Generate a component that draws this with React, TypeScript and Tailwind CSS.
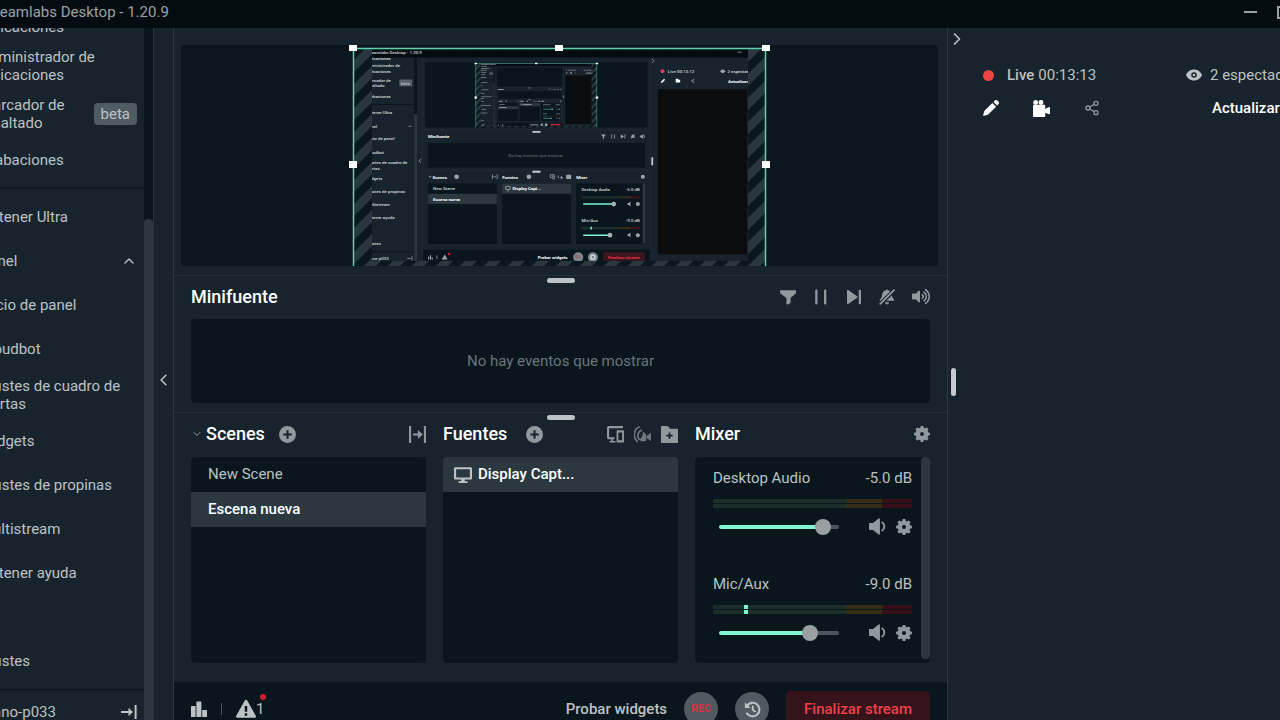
import { useState, type ReactNode } from "react";
import { ChevronDown, ChevronLeft, ChevronRight, ChevronUp, Share2 } from "lucide-react";
import { FaVolumeUp } from "react-icons/fa";

type IconProps = { className?: string };

function Icon({ className = "h-4 w-4", children }: { className?: string; children: ReactNode }) {
  return (
    <svg className={`shrink-0 ${className}`} viewBox="0 0 16 16" fill="currentColor" aria-hidden="true">
      {children}
    </svg>
  );
}

function GearIcon({ className }: IconProps) {
  return (
    <Icon className={className}>
      <circle cx="8" cy="8" r="4.2" fill="none" stroke="currentColor" strokeWidth="4.4" />
      {[0, 45, 90, 135].map((deg) => (
        <g key={deg} transform={`rotate(${deg} 8 8)`}>
          <rect x="6.4" y="0" width="3.2" height="3.6" rx="0.8" />
          <rect x="6.4" y="12.4" width="3.2" height="3.6" rx="0.8" />
        </g>
      ))}
    </Icon>
  );
}

function PlusCircleIcon({ className }: IconProps) {
  return (
    <Icon className={className}>
      <path fillRule="evenodd" d="M8 0a8 8 0 1 0 0 16A8 8 0 0 0 8 0ZM7 4h2v3h3v2H9v3H7V9H4V7h3V4Z" />
    </Icon>
  );
}

function FilterIcon({ className }: IconProps) {
  return (
    <Icon className={className}>
      <path d="M.8 1.2h14.4c.5 0 .8.4.8.8v1.4c0 .4-.1.7-.4 1L10.6 9v4.3c0 .4-.2.7-.5.9l-2.4 1.3c-.6.3-1.300 0-1.300-.7V9L.4 4.4C.1 4.100 0 3.800 0 3.400V2c0-.4.300-.8.8-.8Z" />
    </Icon>
  );
}

function PauseIcon({ className }: IconProps) {
  return (
    <Icon className={className}>
      <rect x="2.2" y="0.5" width="2.3" height="15" rx="1" />
      <rect x="11" y="0.5" width="2.3" height="15" rx="1" />
    </Icon>
  );
}

function SkipIcon({ className }: IconProps) {
  return (
    <Icon className={className}>
      <path d="M1 1.700c0-.7.8-1.100 1.300-.7l8.800 6.300c.5.4.5 1 0 1.400L2.300 15c-.5.4-1.300 0-1.300-.7V1.700Z" />
      <rect x="12.700" y="0.800" width="2.300" height="14.400" rx="0.800" />
    </Icon>
  );
}

function BellSlashIcon({ className }: IconProps) {
  return (
    <Icon className={className}>
      <path d="M8 .4c.6 0 1 .4 1 .9 1.100.2 2 .7 2.600 1.400L2.600 11.800H1.500c-.8 0-1-.8-.5-1.300C2.600 9 3.100 7.600 3.100 5.800 3.100 3.500 4.700 1.700 7 1.300c0-.5.4-.9 1-.9Z" />
      <path d="M13 6.300c.1 1.700.6 3 2 4.200.5.5.3 1.300-.5 1.300H7.300L13 6.300ZM6 13.200h4c0 1.200-.9 2.100-2 2.100s-2-.9-2-2.100Z" />
      <path d="M15 1.200 1.300 14.800" stroke="#17242d" strokeWidth="3.600" />
      <path d="M15 1.200 1.300 14.800" stroke="currentColor" strokeWidth="1.900" strokeLinecap="round" />
    </Icon>
  );
}

function SpeakerIcon({ className }: IconProps) {
  return (
    <Icon className={className}>
      <path d="M0 5.600C0 5 .4 4.600 1 4.600h2.800L9 .5c.6-.5 1.300-.1 1.300.6v13.800c0 .7-.7 1.100-1.300.6l-5.200-4.100H1c-.6 0-1-.4-1-1V5.600Z" />
      <path d="M12.500 4.200c2.600 1.600 2.600 6 0 7.600" fill="none" stroke="currentColor" strokeWidth="1.800" strokeLinecap="round" />
    </Icon>
  );
}

function TransitionIcon({ className }: IconProps) {
  return (
    <Icon className={className}>
      <path d="M0 0h2v16H0zM14 0h2v16h-2zM3.800 7h4.600V3.800L13 8l-4.600 4.200V9H3.800z" />
    </Icon>
  );
}

function DevicesIcon({ className }: IconProps) {
  return (
    <Icon className={className}>
      <path d="M1.500 0H15v2H2v8.500h5v2H5.500V14H8v1.500H2.500V14h1.500v-1.500H1.500C.7 12.500 0 11.800 0 11V1.500C0 .7.7 0 1.500 0Z" />
      <path fillRule="evenodd" d="M10 4h5c.6 0 1 .4 1 1v9.500c0 .6-.4 1-1 1h-5c-.6 0-1-.4-1-1V5c0-.6.4-1 1-1Zm.7 2v7.500h3.600V6h-3.600Z" />
    </Icon>
  );
}

function StudioIcon({ className }: IconProps) {
  return (
    <Icon className={className}>
      <path d="M5 1C-.9 3-.9 11 3 14.500M7 4C3 5.500 3 10.500 5 12.500" fill="none" stroke="currentColor" strokeWidth="1.600" strokeLinecap="round" />
      <path d="M8.500 5.500 11.500 8v5.500c0 .5-.4.900-.9.900H6.500L5.500 13l2.200-3.500.8-4ZM12 9.500 16 6v8l-4-2.500z" />
    </Icon>
  );
}

function FolderPlusIcon({ className }: IconProps) {
  return (
    <Icon className={className}>
      <path fillRule="evenodd" d="M1 0h5.500l2 2.500H15c.6 0 1 .4 1 1V15c0 .6-.4 1-1 1H1c-.6 0-1-.4-1-1V1c0-.6.4-1 1-1ZM7.200 6v2.200H5v1.600h2.200V12h1.600V9.800H11V8.200H8.800V6H7.200Z" />
    </Icon>
  );
}

function MonitorIcon({ className }: IconProps) {
  return (
    <Icon className={className}>
      <path fillRule="evenodd" d="M1.200 1h13.600C15.500 1 16 1.500 16 2.200v8.600c0 .7-.5 1.200-1.200 1.200H9.500v1.500H12V15H4v-1.500h2.500V12H1.200C.5 12 0 11.500 0 10.800V2.200C0 1.500.5 1 1.200 1Zm.7 1.800v7.400h12.200V2.800H1.900Z" />
    </Icon>
  );
}

function StatsIcon({ className }: IconProps) {
  return (
    <Icon className={className}>
      <rect x="0" y="5" width="4.6" height="11" rx="0.6" />
      <rect x="5.4" y="0.5" width="5" height="15.5" rx="0.6" />
      <rect x="11.2" y="9" width="4.8" height="7" rx="0.6" />
    </Icon>
  );
}

function WarningIcon({ className }: IconProps) {
  return (
    <Icon className={className}>
      <path fillRule="evenodd" d="M7 1.200c.4-.8 1.600-.8 2 0l6.800 12.200c.4.800-.1 1.600-1 1.600H1.200c-.9 0-1.400-.8-1-1.600L7 1.200Zm0 4.300v4.700h2V5.500H7Zm1 5.700a1.200 1.200 0 1 0 0 2.400 1.200 1.200 0 0 0 0-2.400Z" />
    </Icon>
  );
}

function ReplayIcon({ className }: IconProps) {
  return (
    <Icon className={className}>
      <path d="M2.600 4.800A6.400 6.400 0 1 1 2.800 11.600" fill="none" stroke="currentColor" strokeWidth="2" strokeLinecap="round" />
      <path d="M.8 1.200v5.300h5.300L.8 1.200Z" />
      <path d="M8.200 5v3.400l2.400 1.400" fill="none" stroke="currentColor" strokeWidth="1.700" strokeLinecap="round" />
    </Icon>
  );
}

function EyeIcon({ className }: IconProps) {
  return (
    <Icon className={className}>
      <path fillRule="evenodd" d="M8 2.500c3.600 0 6.600 2.200 8 5.500-1.400 3.300-4.400 5.500-8 5.500S1.400 11.300 0 8c1.400-3.300 4.400-5.500 8-5.500Zm0 2.700a2.800 2.800 0 1 0 0 5.600 2.800 2.800 0 0 0 0-5.600Z" />
      <circle cx="8" cy="8" r="1.300" />
    </Icon>
  );
}

function CollapseRightIcon({ className }: IconProps) {
  return (
    <Icon className={className}>
      <path d="M13.600 1h2v14h-2zM0 7.100h7.500V3.800L12 8l-4.500 4.200V8.900H0z" />
    </Icon>
  );
}

function PencilIcon({ className }: IconProps) {
  return (
    <Icon className={className}>
      <path d="M9.300 2.900 13.100 6.700 4.900 14.700 1 15.800c-.6.2-1-.2-.8-.8L1.300 11.100 9.300 2.900ZM10.500 1.900 11.900.5c.7-.7 1.700-.7 2.400 0l1.200 1.200c.7.7.7 1.700 0 2.400l-1.400 1.400-3.600-3.600Z" />
    </Icon>
  );
}

function CameraIcon({ className }: IconProps) {
  return (
    <Icon className={className}>
      <circle cx="2.500" cy="2.300" r="2.300" />
      <circle cx="7.500" cy="2.300" r="2.300" />
      <path d="M1 4.500h9.500c.6 0 1 .4 1 1v3l3.500-1.800c.5-.3 1 0 1 .6v5.400c0 .6-.5.900-1 .6L11.500 12v3c0 .6-.4 1-1 1H1c-.6 0-1-.4-1-1V5.500c0-.6.4-1 1-1Z" />
    </Icon>
  );
}

const capturedLabels: [number, number, string, boolean?][] = [
  [-20, 16, "Streamlabs Desktop - 1.20.9"],
  [-20, 35, "aplicaciones"],
  [-20, 62, "Administrador de"],
  [-20, 81, "aplicaciones"],
  [-20, 110, "Marcador de"],
  [-20, 129, "resaltado"],
  [-20, 165, "Grabaciones"],
  [-20, 222, "Obtener Ultra"],
  [-20, 267, "Panel"],
  [-20, 310, "Inicio de panel"],
  [-20, 355, "Cloudbot"],
  [-20, 391, "Ajustes de cuadro de"],
  [-20, 410, "alertas"],
  [-20, 446, "Widgets"],
  [-20, 490, "Ajustes de propinas"],
  [-20, 534, "Multistream"],
  [-20, 578, "Obtener ayuda"],
  [-20, 667, "Ajustes"],
  [-20, 717, "Mano-p033"],
  [191, 303, "Minifuente", true],
  [206, 440, "Scenes", true],
  [443, 440, "Fuentes", true],
  [695, 440, "Mixer", true],
  [208, 480, "New Scene"],
  [208, 515, "Escena nueva", true],
  [478, 480, "Display Capt...", true],
  [713, 484, "Desktop Audio"],
  [864, 484, "-5.0 dB"],
  [713, 589, "Mic/Aux"],
  [864, 589, "-9.0 dB"],
  [564, 714, "Probar widgets", true],
  [1007, 81, "Live 00:13:12"],
  [1210, 81, "2 espectadores"],
  [1212, 114, "Actualizar", true],
];

// the captured desktop, which shows the preview inside itself
function CapturedDesktop({ depth }: { depth: number }) {
  return (
    <svg x="372" y="49" width="376" height="212" viewBox="0 0 1280 720">
      <rect width="1280" height="720" fill="#17242d" />
      <rect width="1280" height="28" fill="#030c11" />
      <rect x="144" y="28" width="9" height="192" fill="#09161d" />
      <rect x="144" y="220" width="9" height="500" fill="#2b383f" />
      <path d="M0 188h144M0 689h144" stroke="#09161d" strokeWidth="3" />
      <path d="M173 28v692M173 275h774M173 412h774M947 28v692" stroke="#22313a" strokeWidth="2" />
      <rect x="93" y="103" width="44" height="23" rx="3" fill="#56636a" />
      <rect x="181" y="45" width="757" height="221" fill="#09161d" />
      {depth > 0 && (
        <svg x="181" y="45" width="757" height="221" viewBox="181 45 757 221">
          <CaptureScene depth={depth - 1} />
        </svg>
      )}
      <rect x="191" y="319" width="738" height="84" fill="#09161d" />
      <rect x="191" y="457" width="234" height="206" fill="#09161d" />
      <rect x="191" y="492" width="234" height="35" fill="#2b383f" />
      <rect x="443" y="457" width="235" height="206" fill="#09161d" />
      <rect x="443" y="457" width="235" height="35" fill="#2b383f" />
      <rect x="695" y="457" width="235" height="206" fill="#09161d" />
      <rect x="921" y="457" width="9" height="204" fill="#2b383f" />
      <rect x="174" y="682" width="773" height="38" fill="#09161d" />
      <rect x="973" y="136" width="304" height="562" fill="#0b0c0d" />
      <rect x="787" y="691" width="143" height="29" fill="#3a161e" />
      <path d="M546 281h28M546 417h28M954 368v27" stroke="#c4cace" strokeWidth="6" />
      <g fill="none" stroke="#8f999e" strokeWidth="3">
        <path d="m124 265 5-5 5 5M167 373l-7 7 7 7M953 32l7 7-7 7M1244 10h14M194 431l4 5 4-5" />
        <path d="M410 426v16M426 426v16M413 434h9M816 290v14M826 290v14M861 290v14M607 427h14M607 427v10h7M615 431h7v10h-7z" />
        <path d="M634 430q-3 5 3 9M925 291q6 6 0 12M895 290l-14 14M221 702v12M1087 108l11-6M1087 108l11 6" />
        <path d="M455 467h15v10h-15zM459 482h7M120 712h11M136 705v14" />
      </g>
      <g fill="#9ba4a9">
        <circle cx="288" cy="434" r="8" />
        <circle cx="534" cy="434" r="8" />
        <circle cx="922" cy="434" r="7" />
        <path d="M780 290h16l-6 8v7h-4v-7zM847 290l11 7-11 7zM913 294h4l6-5v16l-6-5h-4zM640 440l5-9 6 9zM661 427h17v15h-17z" />
        <path d="M880 301q4-3 4-8 4-5 8 0 0 5 4 8z" />
        <path d="M191 706h4v10h-4zM197 701h4v15h-4zM203 709h4v7h-4zM237 716l11-17 9 17z" />
        <path d="M870 523h4l6-5v17l-6-5h-4zM870 629h4l6-5v17l-6-5h-4z" />
        <circle cx="905" cy="527" r="7" />
        <circle cx="905" cy="633" r="7" />
        <circle cx="702" cy="708" r="17" fill="#7b878d" />
        <circle cx="752" cy="708" r="17" fill="#7b878d" />
        <circle cx="752" cy="708" r="7" fill="none" stroke="#e2e5e7" strokeWidth="4" />
        <ellipse cx="1194" cy="75" rx="8" ry="6" />
      </g>
      <g fill="#ffffff">
        <path d="M983 115l2-6 9-9 4 4-9 9zM1034 100h9v5l6-2v10h-15z" />
      </g>
      <path d="M713 504h134M713 609h134" stroke="#1d3029" strokeWidth="8" />
      <path d="M847 504h35M847 609h35" stroke="#352e16" strokeWidth="8" />
      <path d="M882 504h30M882 609h30" stroke="#3a1219" strokeWidth="8" />
      <path d="M719 527h104M719 633h91M746 604v10" stroke="#80f5d2" strokeWidth="5" />
      <circle cx="823" cy="527" r="8" fill="#aab1b4" />
      <circle cx="810" cy="633" r="8" fill="#aab1b4" />
      <circle cx="989" cy="75" r="7" fill="#e63a58" />
      <circle cx="262" cy="697" r="4" fill="#d01c34" />
      {depth > 0 ? (
        <g fontSize="15" fill="#d3d8da">
          {capturedLabels.map(([x, y, label, strong]) => (
            <text key={`${x}-${y}`} x={x} y={y} fill={strong ? "#ffffff" : undefined} fontWeight={strong ? 700 : 500}>
              {label}
            </text>
          ))}
          <text x="99" y="120">beta</text>
          <text x="464" y="367" fill="#6b757a">No hay eventos que mostrar</text>
          <text x="691" y="712" fontSize="11" fill="#c1343f">REC</text>
          <text x="803" y="714" fill="#ee3340" fontWeight="700">Finalizar stream</text>
        </g>
      ) : (
        <g fill="#aab3b7">
          {capturedLabels.map(([x, y, label, strong]) => (
            <rect key={`${x}-${y}`} x={x} y={y - 10} width={label.length * 7} height={strong ? 9 : 6} />
          ))}
          <rect x="803" y="702" width="111" height="10" fill="#e02f45" />
        </g>
      )}
    </svg>
  );
}

function CaptureScene({ depth }: { depth: number }) {
  return (
    <>
      <rect x="353" y="48" width="413" height="232" fill="#0a171f" />
      <rect x="353" y="48" width="413" height="232" fill="url(#stripes)" />
      <CapturedDesktop depth={depth} />
      <rect x="353.5" y="48.5" width="412" height="232" fill="none" stroke="#5fd3ab" strokeWidth="1.5" />
      <g fill="#ffffff">
        {[353, 559, 766].map((x) => (
          <rect key={x} x={x - 4} y="45" width="8" height="6" />
        ))}
        <rect x="349" y="161" width="8" height="7" />
        <rect x="762" y="161" width="8" height="7" />
      </g>
    </>
  );
}

function Preview() {
  return (
    <section aria-label="Vista previa" className="pt-[17px] pr-[9px] pb-[9px] pl-[7px]">
      <div className="flex justify-center rounded-xs bg-[#0a171e]">
        <svg className="h-[221px] w-[422px]" viewBox="349 45 422 221" fontFamily="Roboto, sans-serif" role="img" aria-label="Captura de pantalla">
          <defs>
            <pattern id="stripes" width="24" height="24" patternUnits="userSpaceOnUse">
              <path d="M-6 18 18 -6M6 30 30 6" stroke="#2a373f" strokeWidth="8.5" />
            </pattern>
          </defs>
          <CaptureScene depth={1} />
        </svg>
      </div>
    </section>
  );
}

type NavItem = { label: string; lines?: [string, string]; badge?: string; open?: boolean };

const appItems: NavItem[] = [
  { label: "tienda", lines: ["Tienda de", "aplicaciones"] },
  { label: "admin", lines: ["Administrador de", "aplicaciones"] },
  { label: "marcador", lines: ["Marcador de", "resaltado"], badge: "beta" },
  { label: "Grabaciones" },
];

const panelItems: NavItem[] = [
  { label: "Obtener Ultra" },
  { label: "Panel", open: true },
  { label: "Inicio de panel" },
  { label: "Cloudbot" },
  { label: "alertas", lines: ["Ajustes de cuadro de", "alertas"] },
  { label: "Widgets" },
  { label: "Ajustes de propinas" },
  { label: "Multistream" },
  { label: "Obtener ayuda" },
];

function NavRow({ item }: { item: NavItem }) {
  return (
    <li>
      <a href="#" className="flex min-h-11 items-center justify-between py-[6px] pr-[7px] leading-[18px] whitespace-nowrap">
        <span>
          {item.lines ? (
            <>
              {item.lines[0]}
              <br />
              {item.lines[1]}
            </>
          ) : (
            item.label
          )}
        </span>
        {item.badge && <span className="rounded bg-[#4f5c63] px-[7px] py-[2px]">{item.badge}</span>}
        {item.open && <ChevronUp className="h-4 w-4" />}
      </a>
    </li>
  );
}

function Sidebar() {
  return (
    <div className="flex shrink-0 overflow-hidden border-r border-[#26343d]">
      <nav aria-label="Principal" className="-mt-[34px] -ml-5 w-[164px]">
        <ul className="pb-[5px]">
          {appItems.map((item) => (
            <NavRow key={item.label} item={item} />
          ))}
        </ul>
        <ul className="border-t-2 border-[#0f1b22] pt-[6px] pb-11">
          {panelItems.map((item) => (
            <NavRow key={item.label} item={item} />
          ))}
        </ul>
        <ul className="pb-[6px]">
          <NavRow item={{ label: "Ajustes" }} />
        </ul>
        <div className="flex h-11 items-center justify-between border-t-2 border-[#0f1b22] pr-[7px]">
          <span>Mano-p033</span>
          <button type="button" aria-label="Contraer menú">
            <CollapseRightIcon />
          </button>
        </div>
      </nav>
      <div className="w-[9px] bg-[#09161d] pt-[191px]">
        <div className="h-full rounded-t bg-[#2b383f]" />
      </div>
    </div>
  );
}

function ResizeHandle() {
  return <div className="absolute top-[2px] left-1/2 h-[5px] w-7 -translate-x-1/2 rounded-sm bg-[#bdc2c4]" />;
}

function IconButton({ label, children }: { label: string; children: ReactNode }) {
  return (
    <button type="button" aria-label={label} className="flex shrink-0 items-center justify-center text-[#90999d]">
      {children}
    </button>
  );
}

function MiniFeed() {
  return (
    <section className="relative border-t border-[#22303a] px-[17px] pb-[9px]">
      <ResizeHandle />
      <div className="flex h-[43px] items-center justify-between pb-[2px]">
        <h2 className="text-lg leading-6 font-medium text-white">Minifuente</h2>
        <div className="flex items-center gap-[17px]">
          <IconButton label="Filtrar"><FilterIcon /></IconButton>
          <IconButton label="Pausar"><PauseIcon /></IconButton>
          <IconButton label="Saltar"><SkipIcon /></IconButton>
          <IconButton label="Silenciar alertas"><BellSlashIcon /></IconButton>
          <IconButton label="Volumen"><FaVolumeUp className="h-[17px] w-[18px]" /></IconButton>
        </div>
      </div>
      <div className="flex h-[84px] items-center justify-center rounded bg-[#09161d] text-[#6b757a]">
        No hay eventos que mostrar
      </div>
    </section>
  );
}

function Scenes() {
  const [active, setActive] = useState("Escena nueva");

  return (
    <div>
      <div className="flex h-11 items-center pb-[2px]">
        <ChevronDown className="mr-[3px] h-3 w-3 text-[#90999d]" />
        <h2 className="text-lg font-medium text-white">Scenes</h2>
        <div className="ml-[14px]">
          <IconButton label="Añadir escena"><PlusCircleIcon className="h-[17px] w-[17px]" /></IconButton>
        </div>
        <div className="ml-auto">
          <IconButton label="Transiciones"><TransitionIcon className="h-[17px] w-[17px]" /></IconButton>
        </div>
      </div>
      <ul className="h-[206px] overflow-hidden rounded bg-[#09161d]">
        {["New Scene", "Escena nueva"].map((name) => (
          <li key={name}>
            <button
              type="button"
              onClick={() => setActive(name)}
              className={`h-[35px] w-full px-[17px] text-left ${name === active ? "bg-[#2b383f] font-medium text-white" : ""}`}
            >
              {name}
            </button>
          </li>
        ))}
      </ul>
    </div>
  );
}

function Sources() {
  return (
    <div>
      <div className="flex h-11 items-center pb-[2px]">
        <h2 className="text-lg font-medium text-white">Fuentes</h2>
        <div className="ml-[19px]">
          <IconButton label="Añadir fuente"><PlusCircleIcon className="h-[17px] w-[17px]" /></IconButton>
        </div>
        <div className="ml-auto flex gap-[10px]">
          <IconButton label="Salida doble"><DevicesIcon className="h-[17px] w-[17px]" /></IconButton>
          <div className="flex opacity-70">
            <IconButton label="Modo estudio"><StudioIcon className="h-[17px] w-[17px]" /></IconButton>
          </div>
          <IconButton label="Añadir grupo"><FolderPlusIcon className="h-[17px] w-[17px]" /></IconButton>
        </div>
      </div>
      <ul className="h-[206px] overflow-hidden rounded bg-[#09161d]">
        <li>
          <button type="button" className="flex h-[35px] w-full items-center gap-[6px] bg-[#2b383f] px-[11px] text-left font-medium text-white">
            <MonitorIcon className="h-[18px] w-[18px] text-[#bdc2c4]" />
            Display Capt...
          </button>
        </li>
      </ul>
    </div>
  );
}

function Channel({ name, db, level, peak }: { name: string; db: string; level: number; peak?: boolean }) {
  const [value, setValue] = useState(level);
  // the thumb's centre travels between 8px and 112px of the 120px track
  const filled = 8 + (value / 100) * 104;

  return (
    <div className="pb-[39px]">
      <div className="flex justify-between leading-5">
        <span>{name}</span>
        <span>{db}</span>
      </div>
      <div className="mt-[11px] flex flex-col gap-[1px]">
        {[0, 1].map((row) => (
          <div key={row} className="relative flex h-1">
            <div className="w-[67%] bg-[#1b2e29]" />
            <div className="w-[18%] bg-[#352d14]" />
            <div className="w-[15%] bg-[#360f17]" />
            {peak && <div className="absolute left-[31px] h-full w-1 bg-[#80f5d2]" />}
          </div>
        ))}
      </div>
      <div className="mt-[10px] flex items-center pl-[6px] text-[#90999d]">
        <input
          type="range"
          aria-label={name}
          value={value}
          onChange={(e) => setValue(Number(e.target.value))}
          className="h-1 w-[120px] appearance-none rounded-full [&::-webkit-slider-thumb]:h-4 [&::-webkit-slider-thumb]:w-4 [&::-webkit-slider-thumb]:appearance-none [&::-webkit-slider-thumb]:rounded-full [&::-webkit-slider-thumb]:bg-[#9a9fa1]"
          style={{ background: `linear-gradient(to right, #80f5d2 ${filled}px, #4a575e ${filled}px)` }}
        />
        <div className="ml-auto flex gap-[10px]">
          <IconButton label={`Silenciar ${name}`}><SpeakerIcon className="h-[17px] w-[17px]" /></IconButton>
          <IconButton label={`Ajustes de ${name}`}><GearIcon /></IconButton>
        </div>
      </div>
    </div>
  );
}

function Mixer() {
  return (
    <div>
      <div className="flex h-11 items-center justify-between pb-[2px]">
        <h2 className="text-lg font-medium text-white">Mixer</h2>
        <IconButton label="Ajustes del mezclador"><GearIcon /></IconButton>
      </div>
      <div className="flex h-[206px] overflow-hidden rounded bg-[#09161d]">
        <div className="flex-1 pt-[11px] pr-[9px] pl-[18px]">
          <Channel name="Desktop Audio" db="-5.0 dB" level={92} />
          <Channel name="Mic/Aux" db="-9.0 dB" level={80} peak />
        </div>
        <div className="mb-1 w-[9px] rounded bg-[#2b383f]" />
      </div>
    </div>
  );
}

function Footer() {
  return (
    <footer className="flex h-[54px] shrink-0 items-center bg-[#09161d] px-[17px]">
      <button type="button" aria-label="Estadísticas"><StatsIcon /></button>
      <span className="mx-[14px] h-3 w-px bg-[#4a555b]" />
      <button type="button" className="relative flex items-center">
        <WarningIcon className="h-5 w-5" />
        1
        <span className="absolute -top-1 -right-[2px] h-[6px] w-[6px] rounded-full bg-[#d01c34]" />
      </button>
      <div className="ml-auto flex items-center gap-[17px]">
        <button type="button" className="font-medium">Probar widgets</button>
        <button type="button" className="h-[34px] w-[34px] rounded-full bg-[#4f5b61] text-[11px] font-bold text-[#d6323d]">REC</button>
        <button type="button" aria-label="Guardar repetición" className="flex h-[34px] w-[34px] items-center justify-center rounded-full bg-[#4f5b61]">
          <ReplayIcon className="h-[17px] w-[17px]" />
        </button>
        <button type="button" className="h-9 rounded bg-[#34131a] px-[18px] font-medium text-[#f1404a]">Finalizar stream</button>
      </div>
    </footer>
  );
}

function LivePanel() {
  return (
    <aside className="relative w-[333px] shrink-0 overflow-hidden border-l border-[#2a3740]">
      <button type="button" aria-label="Ocultar panel" className="absolute top-[1px] left-[-1px]">
        <ChevronRight className="h-5 w-5" />
      </button>
      <div className="absolute top-[340px] left-[3px] h-7 w-[5px] rounded-sm bg-[#c4cace]" />
      <div className="pt-[37px] pl-[35px] whitespace-nowrap">
        <div className="flex h-5 items-center">
          <div className="flex w-[203px] shrink-0 items-center">
            <span className="mr-[13px] h-[11px] w-[11px] rounded-full bg-[#e94543]" />
            <span className="mr-1 font-medium">Live</span>
            <span>00:13:13</span>
          </div>
          <EyeIcon className="mr-2 h-4 w-4" />
          <span>2 espectadores</span>
        </div>
        <div className="mt-[13px] flex h-5 items-center text-white">
          <div className="flex w-[229px] shrink-0 items-center gap-[34px]">
            <button type="button" aria-label="Editar transmisión"><PencilIcon /></button>
            <button type="button" aria-label="Abrir en directo"><CameraIcon className="h-[17px] w-[17px]" /></button>
            <button type="button" aria-label="Compartir" className="text-[#8c969b]"><Share2 className="h-4 w-4" /></button>
          </div>
          <button type="button" className="font-medium">Actualizar chat</button>
        </div>
      </div>
    </aside>
  );
}

export default function App() {
  return (
    <div className="flex h-screen flex-col overflow-hidden bg-[#17242d] font-['Roboto',sans-serif] text-[15px] text-[#bdc2c4]">
      <header className="flex h-7 shrink-0 items-center justify-between overflow-hidden bg-[#030c11] pb-1 whitespace-nowrap text-[#9ba2a5]">
        <span className="-ml-[19px]">Streamlabs Desktop - 1.20.9</span>
        <div className="-mr-[10px] flex items-center gap-5">
          <button type="button" aria-label="Minimizar" className="h-[2px] w-[13px] bg-current" />
          <button type="button" aria-label="Maximizar" className="h-[13px] w-[13px] border-2 border-current" />
        </div>
      </header>
      <div className="flex min-h-0 flex-1">
        <Sidebar />
        <button type="button" aria-label="Contraer" className="flex w-5 shrink-0 items-center justify-center border-r border-[#2a3740] pt-3">
          <ChevronLeft className="h-5 w-5" />
        </button>
        <main className="flex min-w-0 flex-1 flex-col">
          <Preview />
          <MiniFeed />
          <section className="relative border-t border-[#22303a] px-[17px] pb-[19px]">
            <ResizeHandle />
            <div className="grid grid-cols-3 gap-[17px]">
              <Scenes />
              <Sources />
              <Mixer />
            </div>
          </section>
          <Footer />
        </main>
        <LivePanel />
      </div>
    </div>
  );
}
